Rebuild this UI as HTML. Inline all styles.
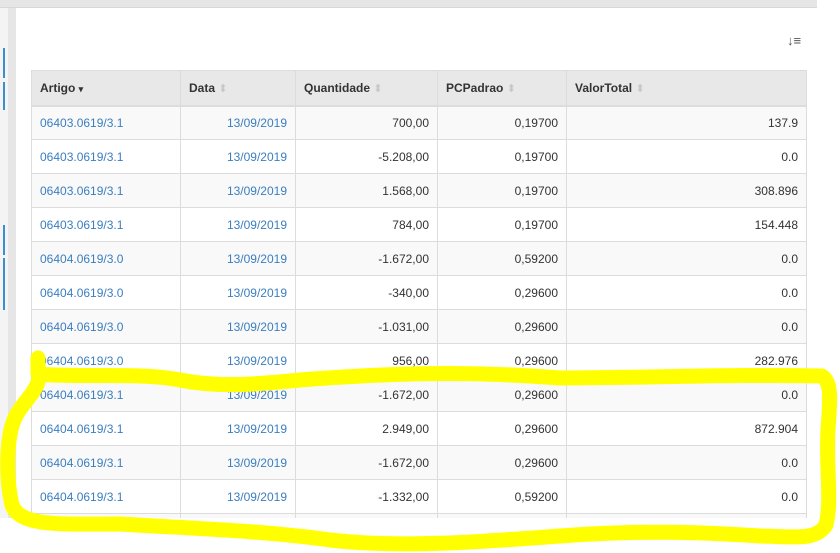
<!DOCTYPE html>
<html><head><meta charset="utf-8"><style>
*{margin:0;padding:0;box-sizing:border-box}
body{width:840px;height:553px;background:#fff;position:relative;overflow:hidden;font-family:"Liberation Sans",Arial,sans-serif;font-size:12px;color:#333}
.topbar{position:absolute;left:0;top:0;width:817px;height:8px;background:#e6e6e6;border-bottom:1px solid #d8d8d8}
.leftstrip{position:absolute;left:0;top:8px;width:8px;height:510px;background:#f4f4f4}
.blue{position:absolute;left:3px;width:2px;background:#3a8fd0}
.gcol{position:absolute;left:8px;top:8px;width:8px;height:510px;background:#e6e6e6}
.panel{position:absolute;left:16px;top:9px;width:801px;height:509px;background:#fff}
table{position:absolute;left:31px;top:70px;width:776px;border-collapse:collapse}
th{background:#e8e8e8;height:35px;text-align:left;padding:0 8px;font-weight:bold;border:1px solid #dcdcdc;border-bottom:2px solid #dcdcdc;color:#333}
td{height:34px;padding:0 8px;border:1px solid #dcdcdc}
tr:nth-child(even) td{background:#f9f9f9}
td.a{color:#3a7ec0}
td.d{color:#3a7ec0;text-align:right}
td.r{text-align:right}
.s{color:#c8c8c8;font-size:11px;font-weight:normal}
.icon{position:absolute;left:787px;top:33px;font-size:13px;color:#555}
svg{position:absolute;left:0;top:0}
</style></head><body>
<div class="topbar"></div>
<div class="leftstrip"></div>
<div class="blue" style="top:48px;height:30px"></div>
<div class="blue" style="top:82px;height:28px"></div>
<div class="blue" style="top:225px;height:30px"></div>
<div class="blue" style="top:258px;height:52px"></div>
<div class="gcol"></div>
<div class="panel"></div>
<div class="icon">↓≡</div>
<table>
<tr><th style="width:149px">Artigo <span style="color:#333;font-size:9px">▾</span></th><th style="width:115px">Data <span class="s">⬍</span></th><th style="width:142px">Quantidade <span class="s">⬍</span></th><th style="width:129px">PCPadrao <span class="s">⬍</span></th><th>ValorTotal <span class="s">⬍</span></th></tr>
<tr><td class="a">06403.0619/3.1</td><td class="d">13/09/2019</td><td class="r">700,00</td><td class="r">0,19700</td><td class="r">137.9</td></tr>
<tr><td class="a">06403.0619/3.1</td><td class="d">13/09/2019</td><td class="r">-5.208,00</td><td class="r">0,19700</td><td class="r">0.0</td></tr>
<tr><td class="a">06403.0619/3.1</td><td class="d">13/09/2019</td><td class="r">1.568,00</td><td class="r">0,19700</td><td class="r">308.896</td></tr>
<tr><td class="a">06403.0619/3.1</td><td class="d">13/09/2019</td><td class="r">784,00</td><td class="r">0,19700</td><td class="r">154.448</td></tr>
<tr><td class="a">06404.0619/3.0</td><td class="d">13/09/2019</td><td class="r">-1.672,00</td><td class="r">0,59200</td><td class="r">0.0</td></tr>
<tr><td class="a">06404.0619/3.0</td><td class="d">13/09/2019</td><td class="r">-340,00</td><td class="r">0,29600</td><td class="r">0.0</td></tr>
<tr><td class="a">06404.0619/3.0</td><td class="d">13/09/2019</td><td class="r">-1.031,00</td><td class="r">0,29600</td><td class="r">0.0</td></tr>
<tr><td class="a">06404.0619/3.0</td><td class="d">13/09/2019</td><td class="r">956,00</td><td class="r">0,29600</td><td class="r">282.976</td></tr>
<tr><td class="a">06404.0619/3.1</td><td class="d">13/09/2019</td><td class="r">-1.672,00</td><td class="r">0,29600</td><td class="r">0.0</td></tr>
<tr><td class="a">06404.0619/3.1</td><td class="d">13/09/2019</td><td class="r">2.949,00</td><td class="r">0,29600</td><td class="r">872.904</td></tr>
<tr><td class="a">06404.0619/3.1</td><td class="d">13/09/2019</td><td class="r">-1.672,00</td><td class="r">0,29600</td><td class="r">0.0</td></tr>
<tr><td class="a">06404.0619/3.1</td><td class="d">13/09/2019</td><td class="r">-1.332,00</td><td class="r">0,59200</td><td class="r">0.0</td></tr>
<tr><td class="a">&nbsp;</td><td></td><td></td><td></td><td></td></tr>
</table>
<div style="position:absolute;left:0;top:518px;width:840px;height:35px;background:#fff"></div>
<svg width="840" height="553"><path d="M38,358 L38,374 C80,378 140,372 180,380 C220,388 260,384 300,380 C380,374 460,370 560,378 C640,378 740,374 822,376 C832,382 830,400 828,430 C826,470 832,500 826,525 C816,540 800,537 760,536 C700,532 640,530 560,536 C480,542 400,548 330,540 C260,530 180,528 120,524 C60,524 20,527 12,505 C6,480 6,440 14,420 C20,405 34,395 38,382" fill="none" stroke="#ffff00" stroke-width="15" stroke-linejoin="round" stroke-linecap="round"/></svg>
</body></html>
